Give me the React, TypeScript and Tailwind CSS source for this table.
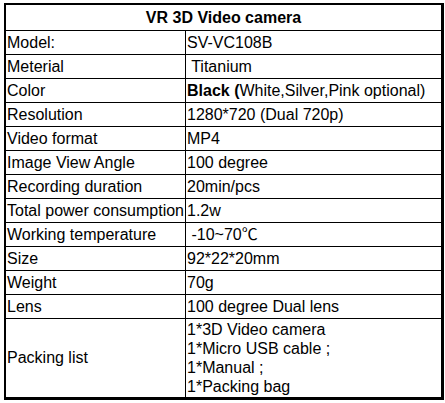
const rows: { label: string; value: React.ReactNode }[] = [
  { label: 'Model:', value: 'SV-VC108B' },
  { label: 'Meterial', value: ' Titanium' },
  {
    label: 'Color',
    value: (
      <>
        <span className="font-bold">Black (</span>White,Silver,Pink optional)
      </>
    ),
  },
  { label: 'Resolution', value: '1280*720 (Dual 720p)' },
  { label: 'Video format', value: 'MP4' },
  { label: 'Image View Angle', value: '100 degree' },
  { label: 'Recording duration', value: '20min/pcs' },
  { label: 'Total power consumption', value: '1.2w' },
  { label: 'Working temperature', value: ' -10~70℃' },
  { label: 'Size', value: '92*22*20mm' },
  { label: 'Weight', value: '70g' },
  { label: 'Lens', value: '100 degree Dual lens' },
];

const packing = ['1*3D Video camera', '1*Micro USB cable ;', '1*Manual ;', '1*Packing bag'];

export default function App() {
  return (
    <div
      className="min-h-screen bg-white pl-[4px] pt-[3px] text-[16px] text-black"
      style={{ fontFamily: '"Liberation Sans", Arial, "Noto Sans CJK SC", sans-serif' }}
    >
      <div className="w-[440px] border-t-2 border-l-2 border-r-[3px] border-b-[3px] border-black">
        <div className="flex h-[26px] items-center justify-center border-b border-black font-bold">
          VR 3D Video camera
        </div>
        {rows.map((row) => (
          <div key={row.label} className="grid h-[24px] grid-cols-[180px_1fr] border-b border-black">
            <div className="flex items-center whitespace-nowrap border-r border-black pl-[1px]">
              {row.label}
            </div>
            <div className="flex items-center whitespace-pre pl-[1px]">{row.value}</div>
          </div>
        ))}
        <div className="grid h-[78px] grid-cols-[180px_1fr]">
          <div className="flex items-center border-r border-black pl-[1px]">Packing list</div>
          <div className="flex flex-col justify-center pl-[1px] leading-[19px]">
            {packing.map((p) => (
              <div key={p}>{p}</div>
            ))}
          </div>
        </div>
      </div>
    </div>
  );
}
